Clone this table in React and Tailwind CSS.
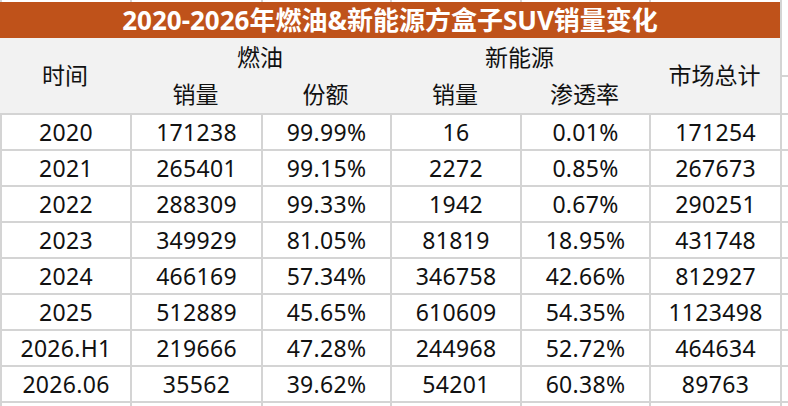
import React from "react";

const rows = [
  ["2020", "171238", "99.99%", "16", "0.01%", "171254"],
  ["2021", "265401", "99.15%", "2272", "0.85%", "267673"],
  ["2022", "288309", "99.33%", "1942", "0.67%", "290251"],
  ["2023", "349929", "81.05%", "81819", "18.95%", "431748"],
  ["2024", "466169", "57.34%", "346758", "42.66%", "812927"],
  ["2025", "512889", "45.65%", "610609", "54.35%", "1123498"],
  ["2026.H1", "219666", "47.28%", "244968", "52.72%", "464634"],
  ["2026.06", "35562", "39.62%", "54201", "60.38%", "89763"],
];

const cols = "grid grid-cols-[128px_129px_127px_128px_127px_129px_1fr] gap-x-[2px] pl-[2px]";

export default function App() {
  return (
    <div
      className="w-[788px] h-[406px] overflow-hidden bg-white text-[#111]"
      style={{ fontFamily: '"Noto Sans", "Noto Sans CJK SC", sans-serif' }}
    >
      {/* top strip */}
      <div className={`${cols} h-[2px] bg-[#d4d4d4]`}>
        {Array.from({ length: 7 }).map((_, i) => (
          <div key={i} className="bg-white" />
        ))}
      </div>

      {/* title */}
      <div className="flex h-[36px]">
        <div className="w-[780px] bg-[#bf521a] flex items-center justify-center text-white font-bold text-[26px] leading-none">
          2020-2026年燃油&amp;新能源方盒子SUV销量变化
        </div>
        <div className="w-[2px] bg-[#d4d4d4]" />
        <div className="flex-1 bg-white" />
      </div>

      {/* header */}
      <div className="flex h-[75px]">
        <div className="w-[780px] bg-[#f2f2f2] grid grid-cols-[130px_131px_129px_130px_129px_131px] grid-rows-2 text-[23px] leading-none">
          <div className="row-span-2 flex items-center justify-center">时间</div>
          <div className="col-span-2 flex items-center justify-center pt-[1px]">燃油</div>
          <div className="col-span-2 flex items-center justify-center pt-[1px]">新能源</div>
          <div className="row-span-2 flex items-center justify-center">市场总计</div>
          <div className="flex items-center justify-center pt-[1px]">销量</div>
          <div className="flex items-center justify-center pt-[1px]">份额</div>
          <div className="flex items-center justify-center pt-[1px]">销量</div>
          <div className="flex items-center justify-center pt-[1px]">渗透率</div>
        </div>
        <div className="w-[2px] bg-[#d4d4d4]" />
        <div className="flex-1 flex flex-col">
          <div className="flex-1 bg-white" />
          <div className="h-[2px] bg-[#d4d4d4]" />
          <div className="flex-1 bg-white" />
        </div>
      </div>

      {/* data */}
      <div className={`${cols} gap-y-[2px] py-[2px] bg-[#d4d4d4] auto-rows-[34px]`}>
        {rows.map((r, i) => (
          <React.Fragment key={i}>
            {r.map((c, j) => (
              <div
                key={j}
                className="bg-white flex items-center justify-center text-[23px] leading-none tracking-[0.3px]"
              >
                {c}
              </div>
            ))}
            <div className="bg-white" />
          </React.Fragment>
        ))}
        {Array.from({ length: 7 }).map((_, i) => (
          <div key={"e" + i} className="bg-white" />
        ))}
      </div>
    </div>
  );
}
